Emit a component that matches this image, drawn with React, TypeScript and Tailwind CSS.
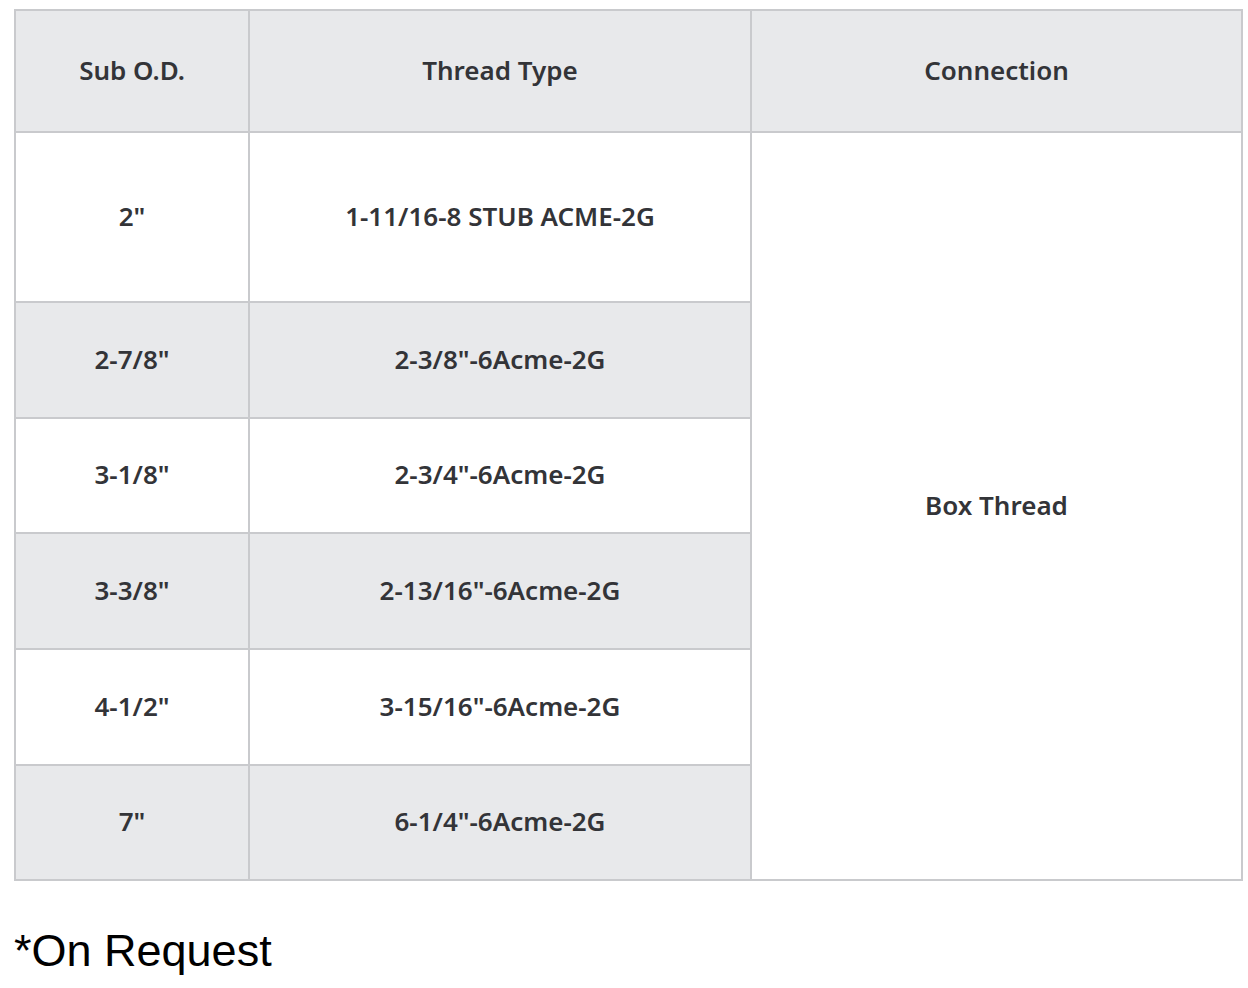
import React from "react";

const rows = [
  { od: '2"', thread: "1-11/16-8 STUB ACME-2G", h: "h-[170px]", bg: "bg-white" },
  { od: '2-7/8"', thread: '2-3/8"-6Acme-2G', h: "h-[116px]", bg: "bg-[#e8e9eb]" },
  { od: '3-1/8"', thread: '2-3/4"-6Acme-2G', h: "h-[115px]", bg: "bg-white" },
  { od: '3-3/8"', thread: '2-13/16"-6Acme-2G', h: "h-[116px]", bg: "bg-[#e8e9eb]" },
  { od: '4-1/2"', thread: '3-15/16"-6Acme-2G', h: "h-[116px]", bg: "bg-white" },
  { od: '7"', thread: '6-1/4"-6Acme-2G', h: "h-[115px]", bg: "bg-[#e8e9eb]" },
];

export default function App() {
  return (
    <div className="bg-white w-[1248px] h-[988px] pt-[9px] pl-[14px]">
      <table
        className="border-collapse w-[1229px] text-[#333438] text-[26px] font-semibold text-center"
        style={{ fontFamily: '"Source Sans Pro", "Noto Sans", sans-serif' }}
      >
        <thead>
          <tr className="h-[122px] bg-[#e8e9eb]">
            <th className="border-2 border-[#c9cacd] w-[234px] font-semibold pb-[2px]">Sub O.D.</th>
            <th className="border-2 border-[#c9cacd] w-[502px] font-semibold pb-[2px]">Thread Type</th>
            <th className="border-2 border-[#c9cacd] font-semibold pb-[2px]">Connection</th>
          </tr>
        </thead>
        <tbody>
          {rows.map((r, i) => (
            <tr key={i} className={r.h}>
              <td className={`border-2 border-[#c9cacd] pb-[2px] ${r.bg}`}>{r.od}</td>
              <td className={`border-2 border-[#c9cacd] pb-[2px] ${r.bg}`}>{r.thread}</td>
              {i === 0 && (
                <td rowSpan={6} className="border-2 border-[#c9cacd] bg-white pb-[2px]">
                  Box Thread
                </td>
              )}
            </tr>
          ))}
        </tbody>
      </table>
      <div
        className="mt-[44px] text-[45px] text-black leading-[52px]"
        style={{ fontFamily: '"Liberation Sans", Arial, sans-serif' }}
      >
        *On Request
      </div>
    </div>
  );
}
